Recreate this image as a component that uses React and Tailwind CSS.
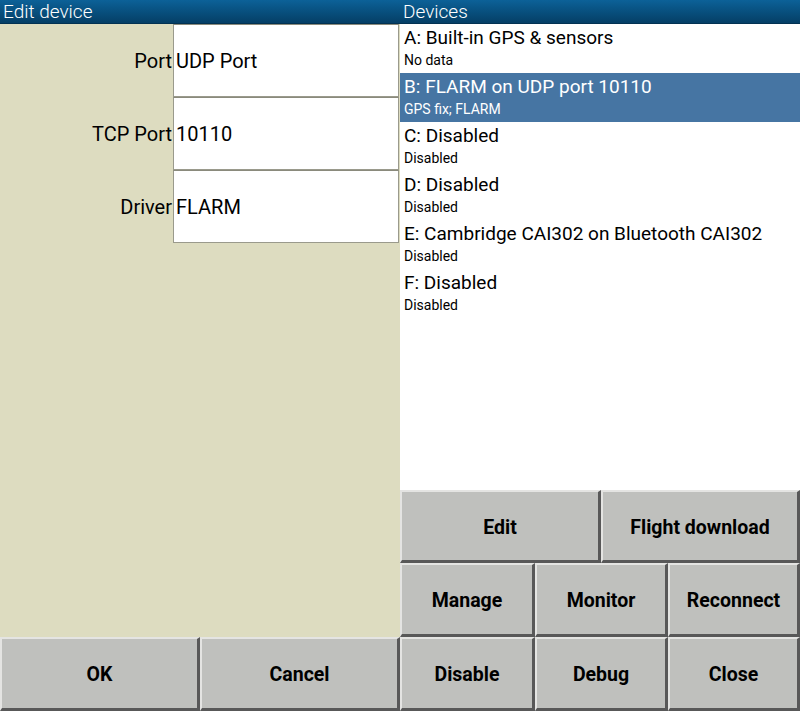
import React from "react";

const Btn = ({ children, className = "" }) => (
  <div
    className={
      "flex items-center justify-center pt-[3px] bg-[#bfc0bd] border-t-2 border-l-2 border-t-[#e4e4e2] border-l-[#e4e4e2] border-b-[3px] border-r-[3px] border-b-[#585858] border-r-[#585858] text-[19.5px] font-bold text-black " +
      className
    }
  >
    {children}
  </div>
);

const Header = ({ children }) => (
  <div className="h-[24px] bg-gradient-to-b from-[#0c6198] to-[#053f66] text-white text-[19px] font-light leading-[24px] pl-[3px] border-b border-[#033252]">
    {children}
  </div>
);

const Field = ({ label, value }) => (
  <div className="flex h-[73px] items-stretch">
    <div className="w-[173px] flex items-center justify-end pr-[1px] text-[20px] text-black">{label}</div>
    <div className="w-[226px] bg-white border border-[#9a9a8c] border-t-[#8a8a7c] flex items-center pl-[2px] text-[20px] text-black">
      {value}
    </div>
  </div>
);

const items = [
  ["A: Built-in GPS & sensors", "No data"],
  ["B: FLARM on UDP port 10110", "GPS fix; FLARM"],
  ["C: Disabled", "Disabled"],
  ["D: Disabled", "Disabled"],
  ["E: Cambridge CAI302 on Bluetooth CAI302", "Disabled"],
  ["F: Disabled", "Disabled"],
];

export default function App() {
  return (
    <div className="w-[800px] h-[711px] flex overflow-hidden" style={{ fontFamily: "Roboto, 'Liberation Sans', sans-serif" }}>
      <div className="w-[400px] flex flex-col">
        <Header>Edit device</Header>
        <div className="flex-1 bg-[#dddcc0] flex flex-col">
          <Field label="Port" value="UDP Port" />
          <Field label="TCP Port" value="10110" />
          <Field label="Driver" value="FLARM" />
        </div>
        <div className="h-[74px] flex">
          <Btn className="flex-1">OK</Btn>
          <Btn className="flex-1">Cancel</Btn>
        </div>
      </div>
      <div className="w-[400px] flex flex-col bg-white">
        <Header>Devices</Header>
        <div className="flex-1 flex flex-col">
          {items.map(([t, s], i) => (
            <div
              key={i}
              className={
                "h-[49px] pl-[4px] flex flex-col " +
                (i === 1 ? "bg-[#4675a3] text-white" : "text-black")
              }
            >
              <div className="text-[19px] leading-[26px] mt-[1px]">{t}</div>
              <div className="text-[14px] leading-[18px]">{s}</div>
            </div>
          ))}
        </div>
        <div className="flex flex-col">
          <div className="h-[73px] flex">
            <Btn className="w-[201px]">Edit</Btn>
            <Btn className="flex-1">Flight download</Btn>
          </div>
          <div className="h-[74px] flex">
            <Btn className="w-[135px]">Manage</Btn>
            <Btn className="w-[133px]">Monitor</Btn>
            <Btn className="flex-1">Reconnect</Btn>
          </div>
          <div className="h-[74px] flex">
            <Btn className="w-[135px]">Disable</Btn>
            <Btn className="w-[133px]">Debug</Btn>
            <Btn className="flex-1">Close</Btn>
          </div>
        </div>
      </div>
    </div>
  );
}
